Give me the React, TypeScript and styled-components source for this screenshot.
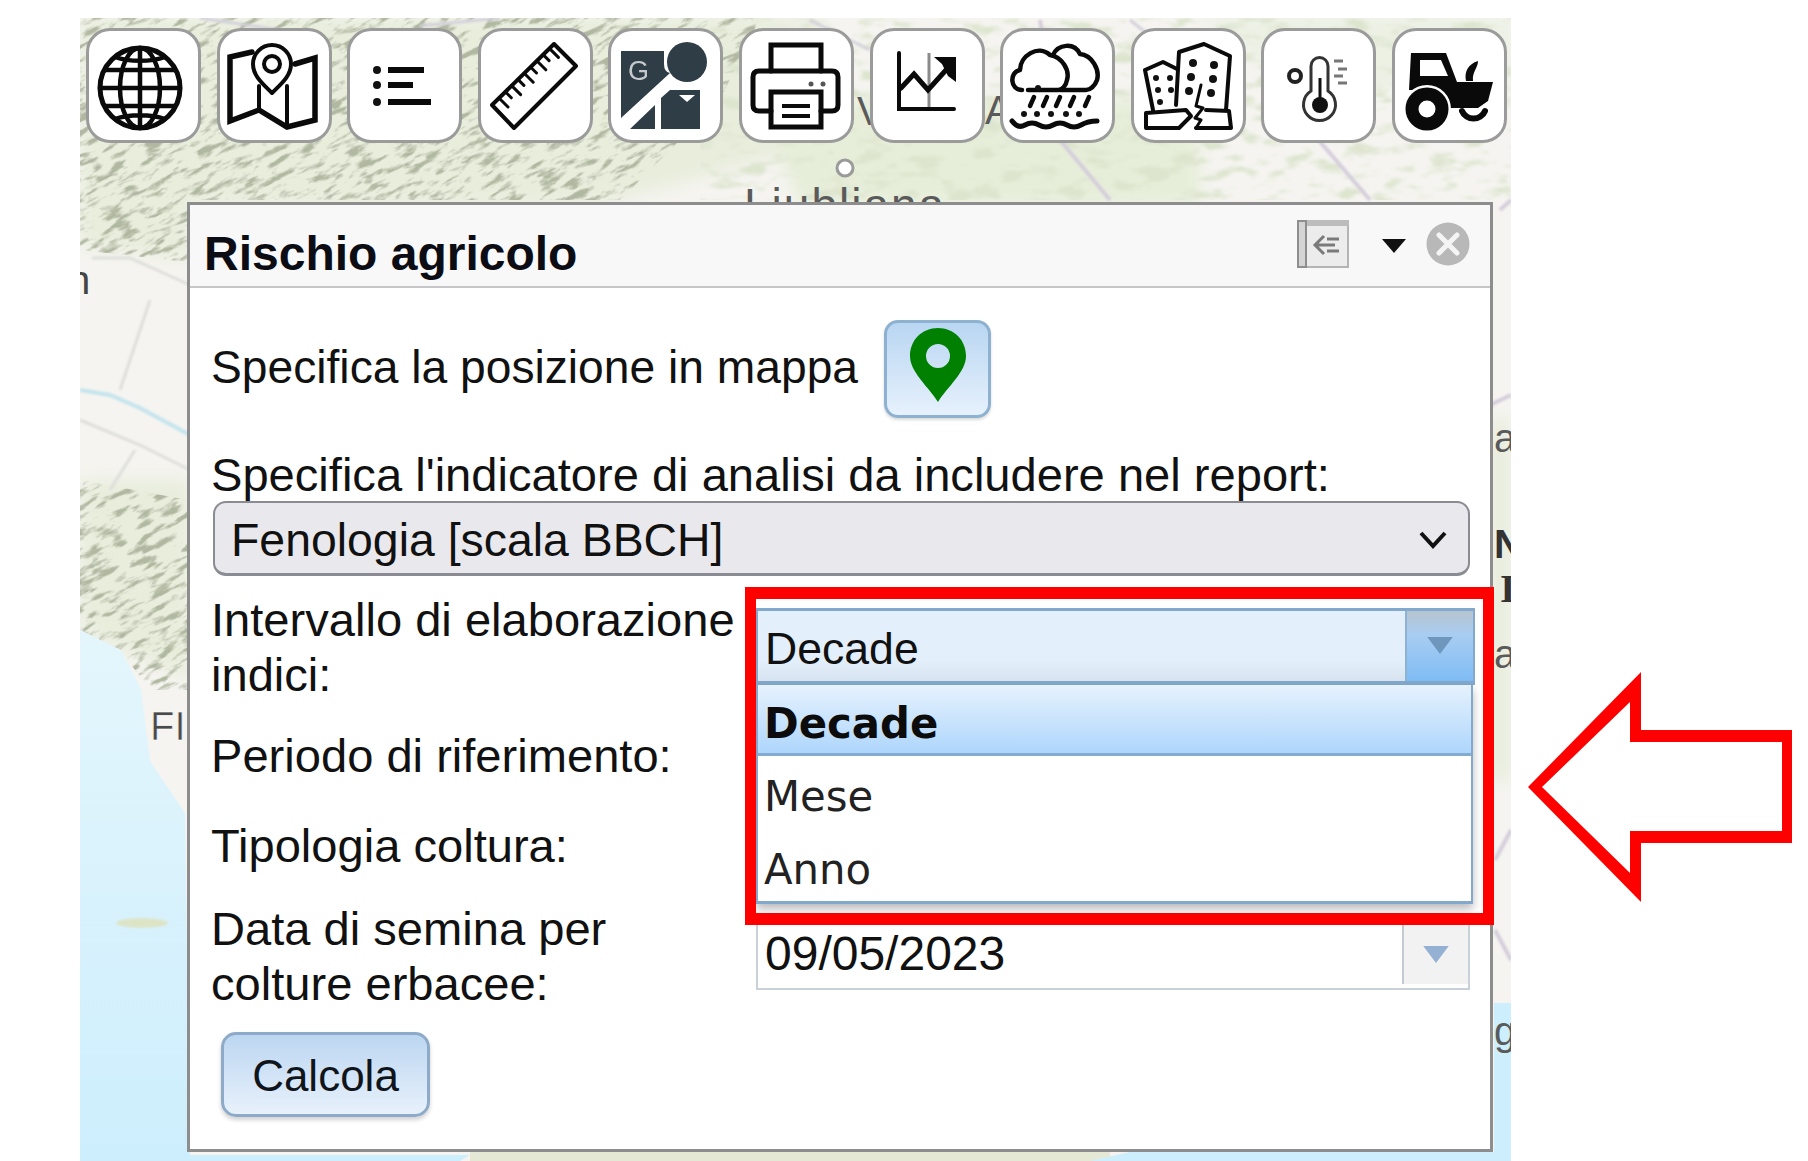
import styled, { createGlobalStyle } from "styled-components";
import type { ReactNode } from "react";

const GlobalStyle = createGlobalStyle`
	html, body {
		margin: 0;
		padding: 0;
		background: #fff;
	}
	* {
		box-sizing: border-box;
	}
`;

const Page = styled.div`
	position: relative;
	width: 1808px;
	height: 1161px;
	overflow: hidden;
	padding: 18px 0 0 80px;
	font-family: "Liberation Sans", Arial, sans-serif;
	color: #111;
`;

const MapArea = styled.div`
	position: relative;
	width: 1431px;
	height: 1143px;
	overflow: hidden;
	padding: 10px 0 0 6px;
`;

const MapCanvas = styled.svg`
	position: absolute;
	left: 0;
	top: 0;
	width: 1431px;
	height: 1143px;
`;

const Toolbar = styled.div`
	position: relative;
	display: flex;
	gap: 15.6px;
`;

const ToolButton = styled.div`
	width: 115px;
	height: 115px;
	background: #fff;
	border: 3px solid #9b9b9b;
	border-radius: 24px;
	overflow: hidden;
	svg {
		display: block;
		width: 115px;
		height: 115px;
		margin: -3px;
		filter: blur(0.6px);
	}
`;

const Panel = styled.div`
	position: relative;
	width: 1306px;
	height: 950px;
	margin: 59px 0 0 101px;
	background: #fff;
	border: 3px solid #8d8d8d;
`;

const PanelHeader = styled.div`
	display: flex;
	align-items: center;
	height: 83px;
	padding: 0 20px 0 14px;
	background: #f8f8f8;
	border-bottom: 2px solid #c6c6c6;
`;

const PanelTitle = styled.div`
	flex: 1;
	font-size: 48px;
	font-weight: 700;
	line-height: 83px;
	color: #0c0c14;
	padding-top: 15px;
`;

const HeaderIcons = styled.div`
	display: flex;
	align-items: center;
	margin-top: -3px;
	svg {
		display: block;
	}
`;

const DockIcon = styled.svg`
	width: 52px;
	height: 48px;
	margin-right: 33px;
`;

const CaretIcon = styled.svg`
	width: 24px;
	height: 14px;
	margin: 4px 20px 0 0;
`;

const CloseIcon = styled.svg`
	width: 44px;
	height: 44px;
`;

const PanelBody = styled.div`
	padding: 32px 20px 0 21px;
`;

const LocateRow = styled.div`
	display: flex;
	align-items: center;
	gap: 26px;
	height: 98px;
`;

const Label = styled.div`
	font-size: 47.1px;
	line-height: 55px;
`;

const LocateLabel = styled(Label)`
	font-size: 46.2px;
	margin-top: -4px;
`;

const IndicatorLabel = styled(Label)`
	margin-top: 29px;
`;

const PinButton = styled.div`
	display: flex;
	align-items: flex-start;
	justify-content: center;
	width: 107px;
	height: 98px;
	padding-top: 5px;
	background: linear-gradient(#b9d6f2, #e6f1fc);
	border: 3px solid #8fb1d0;
	border-radius: 14px;
	box-shadow: 0 2px 3px rgba(0, 0, 0, 0.15);
`;

const NativeSelect = styled.div`
	display: flex;
	align-items: center;
	justify-content: space-between;
	width: 1257px;
	height: 75px;
	margin: -1px 0 0 2px;
	padding: 4px 20px 0 16px;
	background: #e9e9ed;
	border: 2px solid #8b8b94;
	border-bottom-width: 3px;
	border-radius: 13px;
	font-size: 46.4px;
	svg {
		display: block;
	}
`;

const FormRow = styled.div<{ $top: number; $height: number }>`
	display: flex;
	margin-top: ${(p) => p.$top}px;
	height: ${(p) => p.$height}px;
`;

const FormLabel = styled(Label)`
	width: 545px;
	flex: none;
	line-height: 54.5px;
`;

const FieldCell = styled.div<{ $top: number }>`
	position: relative;
	margin-top: ${(p) => p.$top}px;
`;

const ActiveField = styled.div`
	display: flex;
	width: 719px;
	height: 77px;
	background: linear-gradient(#e3f0fc, #e3f0fc 70%, #d7e3ee);
	border: 2px solid #82a9cd;
	border-top-width: 3px;
	border-bottom-width: 4px;
`;

const FieldText = styled.div<{ $size: number; $top: number }>`
	flex: 1;
	padding: ${(p) => p.$top}px 0 0 7px;
	font-size: ${(p) => p.$size}px;
	line-height: 62px;
	color: #111;
`;

const ActiveTrigger = styled.div`
	display: flex;
	justify-content: center;
	width: 68px;
	padding-top: 26px;
	background: linear-gradient(#b7c4d0, #a8cdf2 35%, #7fbcf4);
	border-left: 2px solid #8db2d4;
	svg {
		display: block;
	}
`;

const Menu = styled.div`
	position: absolute;
	left: 0;
	top: 77px;
	width: 717px;
	height: 219px;
	background: #fff;
	border: 2px solid #82a9cd;
	border-top: none;
	border-bottom-width: 3px;
	box-shadow: 0 5px 9px rgba(0, 0, 0, 0.28);
	font-family: "DejaVu Sans", Verdana, sans-serif;
	font-size: 41.8px;
`;

const MenuItem = styled.div<{ $selected?: boolean }>`
	height: ${(p) => (p.$selected ? 71 : 73)}px;
	padding-left: 6px;
	line-height: ${(p) => (p.$selected ? 78 : 81)}px;
	font-weight: ${(p) => (p.$selected ? 700 : 400)};
	color: ${(p) => (p.$selected ? "#0c0c0c" : "#222")};
	background: ${(p) =>
		p.$selected ? "linear-gradient(#e6f2fd, #aed6fc)" : "transparent"};
	border-bottom: ${(p) => (p.$selected ? "3px solid #83abd0" : "none")};
`;

const PlainField = styled.div`
	display: flex;
	width: 714px;
	height: 72px;
	background: #fff;
	border: 2px solid #c9d0d8;
	border-top-width: 1px;
`;

const PlainTrigger = styled.div`
	display: flex;
	justify-content: center;
	width: 66px;
	padding-top: 27px;
	margin: 0 0 4px;
	background: #f2f2f2;
	border-left: 2px solid #c3c9d0;
	svg {
		display: block;
	}
`;

const CalcButton = styled.div`
	display: flex;
	align-items: center;
	justify-content: center;
	width: 209px;
	height: 85px;
	margin: 21px 0 0 10px;
	padding-top: 2px;
	background: linear-gradient(#bcd6f1, #e7f1fb);
	border: 3px solid #8dabc9;
	border-radius: 15px;
	box-shadow: 0 3px 4px rgba(0, 0, 0, 0.18);
	font-size: 44px;
	color: #10151c;
`;

const RedFrame = styled.div`
	position: absolute;
	left: 745px;
	top: 587px;
	width: 749px;
	height: 338px;
	border-style: solid;
	border-color: #ff0000;
	border-width: 12px 11px;
`;

const RedArrow = styled.svg`
	position: absolute;
	left: 1520px;
	top: 660px;
	width: 280px;
	height: 250px;
`;

const stroke = { fill: "none", stroke: "#0a0a0a", strokeLinecap: "round", strokeLinejoin: "round" } as const;

const Icon = ({ children }: { children: ReactNode }) => (
	<svg viewBox="0 0 115 115">{children}</svg>
);

const GlobeIcon = () => (
	<Icon>
		<g {...stroke} strokeWidth={4.5}>
			<circle cx="54" cy="60" r="40" strokeWidth={5} />
			<ellipse cx="54" cy="60" rx="20" ry="40" />
			<path d="M54 20v80M14 60h80M20 42h68M20 78h68M29 29c14 5 36 5 50 0M29 91c14-5 36-5 50 0" />
		</g>
	</Icon>
);

const MapPinIcon = () => (
	<Icon>
		<g {...stroke} strokeWidth={5.5}>
			<path d="M35 24L13 29V93L42 82L70 99L98 92V30L78 36" strokeLinejoin="miter" />
			<path d="M42 58V82M70 58V99" strokeWidth={4} />
			<path d="M55 65C46 56 36 48 36 36A19 19 0 0 1 74 36C74 48 64 56 55 65Z" strokeWidth={4} />
			<circle cx="55" cy="36" r="8" strokeWidth={4} />
		</g>
	</Icon>
);

const ListIcon = () => (
	<Icon>
		<g fill="#111">
			<circle cx="30" cy="42" r="4" />
			<circle cx="30" cy="57" r="4" />
			<circle cx="30" cy="74" r="4" />
		</g>
		<path d="M41 42H77M41 57H66M41 74H84" {...stroke} strokeWidth={6} strokeLinecap="butt" />
	</Icon>
);

const RulerIcon = () => {
	const ticks = [0, 1, 2, 3, 4, 5, 6, 7, 8].map((i) => {
		const x = 21 + i * 6.3;
		const y = 70 - i * 6.2;
		const len = i % 2 === 0 ? 9 : 6;
		return `M${x} ${y}l${len} ${len}`;
	});
	return (
		<Icon>
			<g {...stroke} strokeWidth={4}>
				<path d="M76 16L98 38L36 100L14 77Z" />
				<path d={ticks.join("")} strokeWidth={3} />
			</g>
		</Icon>
	);
};

const GeoIcon = () => (
	<Icon>
		<g fill="#2f3d47">
			<path d="M13 23H56V36Q56 44 62 45L13 90Z" />
			<circle cx="79" cy="34" r="20" />
			<path d="M22 101L47 77V101Z" />
			<path d="M53 70L62 62H92V101H53Z" />
		</g>
		<path d="M71 67H87L79 74Z" fill="#fff" />
		<text x="20" y="52" fontFamily="Liberation Sans" fontSize="27" fill="#c5c9cc">
			G
		</text>
	</Icon>
);

const PrinterIcon = () => (
	<Icon>
		<g {...stroke} strokeWidth={5}>
			<path d="M32 43V17H82V43" strokeLinejoin="miter" />
			<path d="M32 83H20Q14 83 14 77V49Q14 43 20 43H93Q99 43 99 49V77Q99 83 93 83H82" />
			<rect x="32" y="64" width="50" height="35" strokeLinejoin="miter" />
			<path d="M43 78H71M43 88H71" strokeWidth={4} strokeLinecap="butt" />
		</g>
		<circle cx="72" cy="56" r="2.5" fill="#555" />
		<circle cx="84" cy="56" r="2.5" fill="#555" />
	</Icon>
);

const ChartIcon = () => (
	<Icon>
		<path d="M59 25V81" stroke="#8b8b8b" strokeWidth={3} />
		<path d="M29 25V81H84" fill="none" stroke="#0a0a0a" strokeWidth={4} strokeLinecap="round" />
		<path d="M31 60L44 46L58 62L76 42" fill="none" stroke="#0a0a0a" strokeWidth={5} strokeLinecap="round" />
		<path d="M64 29H86V54L78 48L72 36Z" fill="#0a0a0a" />
	</Icon>
);

const RainIcon = () => (
	<Icon>
		<g {...stroke} strokeWidth={4.5}>
			<path d="M22 62C10 62 9 44 20 42C20 28 38 16 50 27C62 29 70 42 67 52C66 58 62 62 58 62H28" />
			<path d="M53 27C58 16 74 14 80 26C92 27 100 42 97 52C95 58 90 62 86 62H60" />
			<path
				d="M34 69L30 78M47 69L43 78M60 69L56 78M74 69L70 78M89 69L85 78"
				strokeWidth={4.5}
			/>
			<path d="M12 93Q18 101 25 97T39 97T53 97T67 97T81 97T97 93" strokeWidth={5} />
		</g>
		<g fill="#111">
			<circle cx="38" cy="60" r="3" />
			<circle cx="24" cy="86" r="3" />
			<circle cx="37" cy="86" r="3" />
			<circle cx="51" cy="86" r="3" />
			<circle cx="66" cy="86" r="3" />
			<circle cx="79" cy="86" r="3" />
		</g>
	</Icon>
);

const BuildingsIcon = () => (
	<Icon>
		<g {...stroke} strokeWidth={4}>
			<path d="M45 77L48 24L73 16L99 28L95 82" />
			<path d="M22 82L14 42L32 34L46 41" />
			<path d="M55 82L15 85V100H48L60 88Z" />
			<path d="M65 100H100L98 83L75 82" />
			<path d="M70 57L65 78L72 80L64 90L70 92L65 100" strokeWidth={3} />
		</g>
		<g fill="#111">
			<circle cx="62" cy="35" r="4" />
			<circle cx="83" cy="37" r="4" />
			<circle cx="60" cy="49" r="4" />
			<circle cx="82" cy="51" r="4" />
			<circle cx="58" cy="63" r="4" />
			<circle cx="80" cy="65" r="4" />
			<circle cx="25" cy="50" r="3" />
			<circle cx="39" cy="50" r="3" />
			<circle cx="27" cy="62" r="3" />
			<circle cx="40" cy="62" r="3" />
			<circle cx="29" cy="74" r="3" />
		</g>
	</Icon>
);

const ThermoIcon = () => (
	<Icon>
		<path
			d="M50 63V38A8.5 8.5 0 0 1 67 38V63A16 16 0 1 1 50 63Z"
			fill="none"
			stroke="#333"
			strokeWidth={3}
		/>
		<circle cx="59" cy="77" r="8" fill="#111" />
		<path d="M59 50V75" stroke="#111" strokeWidth={3} />
		<circle cx="34" cy="48" r="6" fill="none" stroke="#222" strokeWidth={4} />
		<path d="M73 33H82M77 41H86M73 48H82M77 55H86" stroke="#777" strokeWidth={3} />
	</Icon>
);

const TractorIcon = () => (
	<Icon>
		<path d="M19 25H54L65 54H101L96 73L86 80H58L30 62H17Z" fill="#0a0a0a" />
		<path d="M28 32H49L56 48H28Z" fill="#fff" />
		<circle cx="35" cy="81" r="24" fill="#fff" />
		<circle cx="35" cy="81" r="15" fill="none" stroke="#0a0a0a" strokeWidth={13} />
		<path d="M70 83A12.5 12.5 0 0 0 93 83" fill="none" stroke="#0a0a0a" strokeWidth={6} strokeLinecap="round" />
		<path d="M74 53C72 44 76 36 86 33C86 40 80 44 81 53Z" fill="#0a0a0a" />
	</Icon>
);

const DownArrow = ({ color, w, h }: { color: string; w: number; h: number }) => (
	<svg width={w} height={h} viewBox="0 0 24 16">
		<path d="M0 0H24L12 16Z" fill={color} />
	</svg>
);

const MapBackground = () => (
	<MapCanvas viewBox="80 18 1431 1143" aria-hidden="true">
		<defs>
			<filter id="ridges" x="0" y="0" width="100%" height="100%">
				<feTurbulence type="fractalNoise" baseFrequency="0.045 0.16" numOctaves="4" seed="7" />
				<feColorMatrix values="0 0 0 0 0.44 0 0 0 0 0.48 0 0 0 0 0.36 3.8 3.8 0 0 -3.8" />
				<feGaussianBlur stdDeviation="0.7" />
			</filter>
			<filter id="softRidges" x="0" y="0" width="100%" height="100%">
				<feTurbulence type="fractalNoise" baseFrequency="0.035 0.09" numOctaves="4" seed="21" />
				<feColorMatrix values="0 0 0 0 0.72 0 0 0 0 0.78 0 0 0 0 0.62 3 3 0 0 -3" />
				<feGaussianBlur stdDeviation="1" />
			</filter>
			<filter id="blur8">
				<feGaussianBlur stdDeviation="8" />
			</filter>
			<filter id="blur1">
				<feGaussianBlur stdDeviation="1.2" />
			</filter>
			<linearGradient id="sea" x1="0" y1="0" x2="0" y2="1">
				<stop offset="0" stopColor="#e4f6fc" />
				<stop offset="1" stopColor="#cdeefd" />
			</linearGradient>
			<clipPath id="mountains">
				<path d="M80 18H760L720 100L620 200H188V262L80 250Z" />
				<path d="M80 480L188 500V690L150 690L120 650L80 630Z" />
			</clipPath>
			<clipPath id="hills">
				<path d="M700 18H1511V200H700Z" />
			</clipPath>
		</defs>
		<rect x="80" y="18" width="1431" height="1143" fill="#f5f4f0" />
		<g filter="url(#blur8)" fill="#e8eddc">
			<path d="M80 18H800V150L600 205H190V260L80 245Z" />
			<path d="M80 480H190V680L120 650L80 630Z" />
			<path d="M760 100H1200V205H800Z" fill="#e6eed9" />
			<path d="M1200 18H1511V90H1300Z" fill="#ecf1e4" />
			<path d="M1490 420H1511V780H1490Z" />
		</g>
		<g clipPath="url(#mountains)">
			<g transform="rotate(-28 400 300)">
				<rect x="-300" y="-300" width="1500" height="1400" filter="url(#ridges)" />
			</g>
		</g>
		<g clipPath="url(#hills)">
			<rect x="700" y="18" width="811" height="190" filter="url(#softRidges)" />
		</g>
		<path d="M470 1150H1110V1161H470Z" fill="#e6e8d6" />
		<path d="M80 630L121 650L141 689L150 761L185 813L190 1161H80Z" fill="url(#sea)" />
		<path d="M1090 1161L1130 1152H1511V1161Z" fill="#cdeefd" />
		<path d="M80 1155H470L460 1161H80Z" fill="#cdeefd" />
		<path d="M1494 1003H1511V1161H1494Z" fill="#cdeefd" />
		<ellipse cx="142" cy="923" rx="26" ry="5" fill="#dfe2bd" opacity="0.85" filter="url(#blur1)" />
		<g fill="none" filter="url(#blur1)">
			<path d="M80 390L110 395L140 408L190 435" stroke="#c4e4ee" strokeWidth={4} />
			<path d="M80 420L140 445L190 470M150 300L120 390M135 450L110 490M92 258H130L190 285" stroke="#dededb" strokeWidth={3} />
			<path d="M1040 20L1060 140L1110 200M1310 130L1370 200M1500 210L1511 200M1490 405L1511 395M1495 860L1511 830M1495 930L1511 960" stroke="#d5cedb" strokeWidth={4} />
			<path d="M810 20L870 50M1130 20L1180 60M500 18L420 26M200 18L280 30" stroke="#d4d1dc" strokeWidth={3} />
		</g>
		<circle cx="845" cy="168" r="8" fill="#fff" stroke="#9a9a9a" strokeWidth={3} />
		<g fontFamily="Liberation Sans" fontSize="40" fill="#5a5a5a">
			<text x="744" y="221" fontSize="46" letterSpacing="2">
				Ljubljana
			</text>
			<text x="857" y="125">
				V
			</text>
			<text x="985" y="124">
				A
			</text>
			<text x="68" y="294" fill="#444">
				n
			</text>
			<text x="150" y="740" fill="#4a4a4a" stroke="#fff" strokeWidth={0.5}>
				FI
			</text>
			<text x="1494" y="452">
				a
			</text>
			<text x="1494" y="558" fontWeight={700} fill="#333">
				N
			</text>
			<text x="1500" y="602" fontFamily="Liberation Serif" fontWeight={700} fill="#333">
				I
			</text>
			<text x="1494" y="668">
				a
			</text>
			<text x="1494" y="1045">
				g
			</text>
		</g>
	</MapCanvas>
);

const App = () => {
	return (
		<>
			<GlobalStyle />
			<Page>
				<MapArea>
					<MapBackground />
					<Toolbar>
						<ToolButton><GlobeIcon /></ToolButton>
						<ToolButton><MapPinIcon /></ToolButton>
						<ToolButton><ListIcon /></ToolButton>
						<ToolButton><RulerIcon /></ToolButton>
						<ToolButton><GeoIcon /></ToolButton>
						<ToolButton><PrinterIcon /></ToolButton>
						<ToolButton><ChartIcon /></ToolButton>
						<ToolButton><RainIcon /></ToolButton>
						<ToolButton><BuildingsIcon /></ToolButton>
						<ToolButton><ThermoIcon /></ToolButton>
						<ToolButton><TractorIcon /></ToolButton>
					</Toolbar>
					<Panel>
						<PanelHeader>
							<PanelTitle>Rischio agricolo</PanelTitle>
							<HeaderIcons>
								<DockIcon viewBox="0 0 52 48">
									<rect x="1" y="1" width="50" height="46" fill="#ececec" stroke="#b4b4b4" strokeWidth={2} />
									<rect x="0" y="0" width="52" height="6" fill="#bcbcbc" />
									<rect x="1" y="1" width="8" height="46" fill="#d4d4d4" stroke="#8e8e8e" strokeWidth={2} />
									<path d="M38 25H18M27 16L18 25L27 34M30 19H42M30 31H42" fill="none" stroke="#7a7a7a" strokeWidth={3} />
								</DockIcon>
								<CaretIcon viewBox="0 0 24 14">
									<path d="M0 0H24L12 14Z" fill="#111" />
								</CaretIcon>
								<CloseIcon viewBox="0 0 44 44">
									<circle cx="22" cy="22" r="21.5" fill="#b8b8b8" />
									<path d="M13 13L31 31M31 13L13 31" stroke="#f4f4f4" strokeWidth={5} strokeLinecap="round" />
								</CloseIcon>
							</HeaderIcons>
						</PanelHeader>
						<PanelBody>
							<LocateRow>
								<LocateLabel>Specifica la posizione in mappa</LocateLabel>
								<PinButton>
									<svg width="56" height="74" viewBox="0 0 56 74">
										<path
											fillRule="evenodd"
											d="M28 0C12 0 0 12 0 28C0 44 18 58 28 74C38 58 56 44 56 28C56 12 44 0 28 0ZM28 16A12 12 0 1 1 28 40A12 12 0 1 1 28 16Z"
											fill="#008000"
										/>
									</svg>
								</PinButton>
							</LocateRow>
							<IndicatorLabel>Specifica l'indicatore di analisi da includere nel report:</IndicatorLabel>
							<NativeSelect>
								Fenologia [scala BBCH]
								<svg width="30" height="20" viewBox="0 0 30 20">
									<path d="M3 3L15 16L27 3" fill="none" stroke="#111" strokeWidth={4} />
								</svg>
							</NativeSelect>
							<FormRow $top={17} $height={110}>
								<FormLabel>
									Intervallo di elaborazione
									<br />
									indici:
								</FormLabel>
								<FieldCell $top={15}>
									<ActiveField>
										<FieldText $size={44.6} $top={7}>
											Decade
										</FieldText>
										<ActiveTrigger>
											<DownArrow color="#6f96bd" w={26} h={17} />
										</ActiveTrigger>
									</ActiveField>
									<Menu>
										<MenuItem $selected>Decade</MenuItem>
										<MenuItem>Mese</MenuItem>
										<MenuItem>Anno</MenuItem>
									</Menu>
								</FieldCell>
							</FormRow>
							<FormRow $top={26} $height={55}>
								<FormLabel>Periodo di riferimento:</FormLabel>
							</FormRow>
							<FormRow $top={35} $height={55}>
								<FormLabel>Tipologia coltura:</FormLabel>
							</FormRow>
							<FormRow $top={28} $height={109}>
								<FormLabel>
									Data di semina per
									<br />
									colture erbacee:
								</FormLabel>
								<FieldCell $top={16}>
									<PlainField>
										<FieldText $size={48} $top={4}>
											09/05/2023
										</FieldText>
										<PlainTrigger>
											<DownArrow color="#94b0d2" w={26} h={17} />
										</PlainTrigger>
									</PlainField>
								</FieldCell>
							</FormRow>
							<CalcButton>Calcola</CalcButton>
						</PanelBody>
					</Panel>
				</MapArea>
				<RedFrame />
				<RedArrow viewBox="1520 660 280 250">
					<path
						fillRule="evenodd"
						d="M1528 787L1641 672V730H1792V843H1641V902ZM1542 787L1630 873V831H1782V742H1630V702Z"
						fill="#ff0000"
					/>
				</RedArrow>
			</Page>
		</>
	);
};

export default App;
